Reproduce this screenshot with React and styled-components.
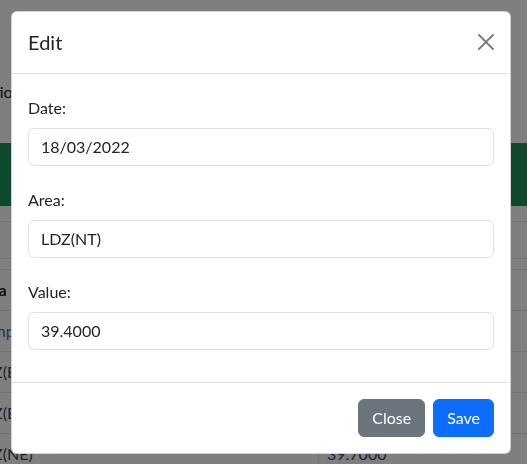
import React from "react";
import styled, { createGlobalStyle } from "styled-components";

const GlobalStyle = createGlobalStyle`
  html, body {
    margin: 0;
    padding: 0;
    background: #ffffff;
    font-family: Lato, "Noto Sans", sans-serif;
    color: #212529;
    overflow: hidden;
  }
  * {
    box-sizing: border-box;
  }
`;

const rows = [
  { area: "Comp", value: "41.2000", link: true },
  { area: "LDZ(EA)", value: "38.9000" },
  { area: "LDZ(EM)", value: "39.1000" },
  { area: "LDZ(NE)", value: "39.7000" },
];

function App() {
  return (
    <>
      <GlobalStyle />
      <Page>
        <Caption>Ratio</Caption>
        <Banner />
        <Strip $h={15} />
        <Strip $h={36} />
        <Strip $h={10} />
        <Table>
          <Cell $head>Area</Cell>
          <Cell $head $right>Value</Cell>
          {rows.map((r) => (
            <React.Fragment key={r.area}>
              <Cell $link={r.link}>{r.area}</Cell>
              <Cell $right>{r.value}</Cell>
            </React.Fragment>
          ))}
        </Table>
      </Page>

      <Backdrop />
      <ModalWrap>
        <Dialog>
          <Header>
            <Title>Edit</Title>
            <CloseX aria-label="Close">
              <svg viewBox="0 0 16 16" width="16" height="16">
                <path
                  fill="#000"
                  d="M.293.293a1 1 0 0 1 1.414 0L8 6.586 14.293.293a1 1 0 1 1 1.414 1.414L9.414 8l6.293 6.293a1 1 0 0 1-1.414 1.414L8 9.414l-6.293 6.293a1 1 0 0 1-1.414-1.414L6.586 8 .293 1.707a1 1 0 0 1 0-1.414z"
                />
              </svg>
            </CloseX>
          </Header>
          <Body>
            <Field>
              <Label>Date:</Label>
              <Input readOnly value="18/03/2022" />
            </Field>
            <Field>
              <Label>Area:</Label>
              <Input readOnly value="LDZ(NT)" />
            </Field>
            <Field>
              <Label>Value:</Label>
              <Input readOnly value="39.4000" />
            </Field>
          </Body>
          <Footer>
            <Button $bg="#6c757d">Close</Button>
            <Button $bg="#0d6efd">Save</Button>
          </Footer>
        </Dialog>
      </ModalWrap>
    </>
  );
}

export default App;

const Page = styled.div`
  margin-left: -35px;
  width: 600px;
  padding-top: 80px;
`;

const Caption = styled.div`
  padding-left: 11px;
  font-size: 16px;
  line-height: 24px;
  color: #212529;
`;

const Banner = styled.div`
  margin-top: 39px;
  height: 63px;
  background: #1e955c;
`;

const Strip = styled.div`
  height: ${(p) => p.$h + 1}px;
  border-bottom: 1px solid #dee2e6;
`;

const Table = styled.div`
  display: grid;
  grid-template-columns: 353px 1fr;
`;

const Cell = styled.div`
  padding: 8px;
  font-size: 16px;
  line-height: 24px;
  white-space: nowrap;
  border-bottom: 1px solid #dee2e6;
  font-weight: ${(p) => (p.$head ? 700 : 400)};
  color: ${(p) => (p.$head ? "#212529" : p.$link ? "#3f62c4" : "#36456a")};
  border-left: ${(p) => (p.$right ? "1px solid #dee2e6" : "none")};
`;

const Backdrop = styled.div`
  position: fixed;
  inset: 0;
  background: rgba(0, 0, 0, 0.5);
`;

const ModalWrap = styled.div`
  position: fixed;
  inset: 0;
  padding: 11px;
`;

const Dialog = styled.div`
  width: 500px;
  background: #ffffff;
  border: 1px solid rgba(0, 0, 0, 0.175);
  border-radius: 6px;
  display: flex;
  flex-direction: column;
`;

const Header = styled.div`
  display: flex;
  align-items: center;
  justify-content: space-between;
  padding: 15px 16px 16px;
  border-bottom: 1px solid #dee2e6;
`;

const Title = styled.h5`
  margin: 0;
  font-size: 20px;
  line-height: 30px;
  font-weight: 400;
  color: #212529;
`;

const CloseX = styled.button`
  display: flex;
  padding: 8px;
  margin: -8px;
  border: 0;
  background: transparent;
  opacity: 0.5;
  cursor: pointer;
`;

const Body = styled.div`
  padding: 16px;
`;

const Field = styled.div`
  padding-top: 6px;
  margin-bottom: 16px;
`;

const Label = styled.label`
  display: block;
  margin-bottom: 8px;
  font-size: 16px;
  line-height: 24px;
  color: #212529;
`;

const Input = styled.input`
  display: block;
  width: 100%;
  padding: 6px 12px;
  font-family: inherit;
  font-size: 16px;
  line-height: 24px;
  color: #212529;
  background: #ffffff;
  border: 1px solid #dee2e6;
  border-radius: 6px;
  outline: none;
`;

const Footer = styled.div`
  display: flex;
  justify-content: flex-end;
  align-items: center;
  padding: 12px;
  border-top: 1px solid #dee2e6;
`;

const Button = styled.button`
  margin: 4px;
  padding: 6px 13px;
  font-family: inherit;
  font-size: 16px;
  line-height: 24px;
  color: #ffffff;
  background: ${(p) => p.$bg};
  border: 1px solid ${(p) => p.$bg};
  border-radius: 6px;
  cursor: pointer;
`;
